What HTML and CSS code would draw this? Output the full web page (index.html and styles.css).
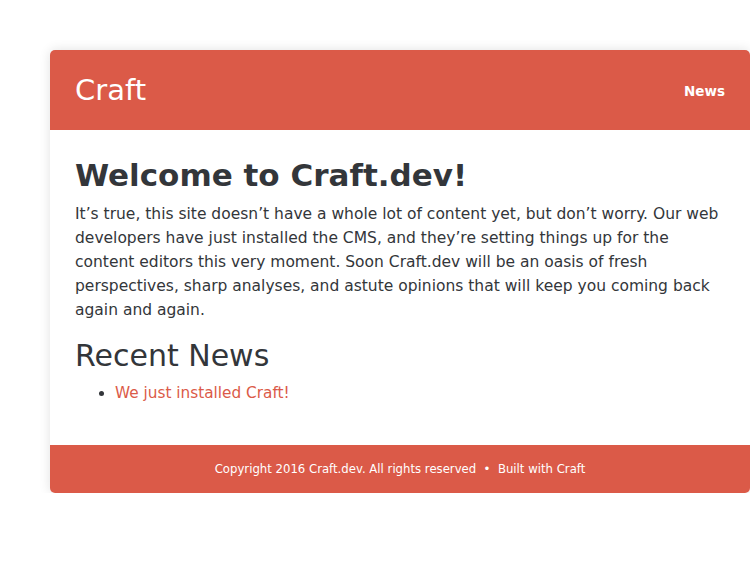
FILE: index.html
```html
<!DOCTYPE html>
<html lang="en">
<head>
<meta charset="utf-8">
<title>Craft.dev</title>
<link rel="stylesheet" href="styles.css">
</head>
<body>
<div class="card">
  <header class="site-header">
    <a class="brand" href="#">Craft</a>
    <nav class="nav"><a href="#">News</a></nav>
  </header>
  <main class="content">
    <h1 class="title">Welcome to Craft.dev!</h1>
    <p class="intro">It’s true, this site doesn’t have a whole lot of content yet, but don’t worry. Our web<br>developers have just installed the CMS, and they’re setting things up for the<br>content editors this very moment. Soon Craft.dev will be an oasis of fresh<br>perspectives, sharp analyses, and astute opinions that will keep you coming back<br>again and again.</p>
    <h2 class="section-title">Recent News</h2>
    <ul class="news-list">
      <li><a href="#">We just installed Craft!</a></li>
    </ul>
  </main>
  <footer class="site-footer">Copyright 2016 Craft.dev. All rights reserved &nbsp;•&nbsp; Built with Craft</footer>
</div>
</body>
</html>
```
FILE: styles.css
```css
html, body {
  margin: 0;
  padding: 0;
  background: #ffffff;
}
body {
  padding: 50px 0 0 50px;
  font-family: "DejaVu Sans", Verdana, sans-serif;
  color: #33363a;
}
.card {
  width: 700px;
  border-radius: 5px;
  box-shadow: 0 0 12px rgba(0, 0, 0, 0.12);
  background: #fff;
  overflow: hidden;
}
.site-header {
  background: #db5a48;
  height: 80px;
  display: flex;
  align-items: center;
  justify-content: space-between;
  padding: 0 25px;
}
.brand {
  color: #fff;
  text-decoration: none;
  font-size: 29px;
  font-weight: normal;
}
.nav a {
  color: #fff;
  text-decoration: none;
  font-weight: bold;
  font-size: 13.5px;
}
.content {
  padding: 22px 25px 40px;
}
.title {
  margin: 0;
  font-size: 31px;
  line-height: 46px;
  font-weight: bold;
}
.intro {
  margin: 4px 0 0;
  font-size: 15.5px;
  line-height: 24px;
}
.section-title {
  margin: 14px 0 0;
  font-size: 30px;
  line-height: 40px;
  font-weight: normal;
}
.news-list {
  margin: 5px 0 0;
  padding-left: 40px;
  font-size: 15.3px;
  line-height: 24px;
}
.news-list a {
  color: #db5a48;
  text-decoration: none;
}
.site-footer {
  background: #db5a48;
  color: #fff;
  height: 48px;
  display: flex;
  align-items: center;
  justify-content: center;
  font-size: 11.7px;
}
```
